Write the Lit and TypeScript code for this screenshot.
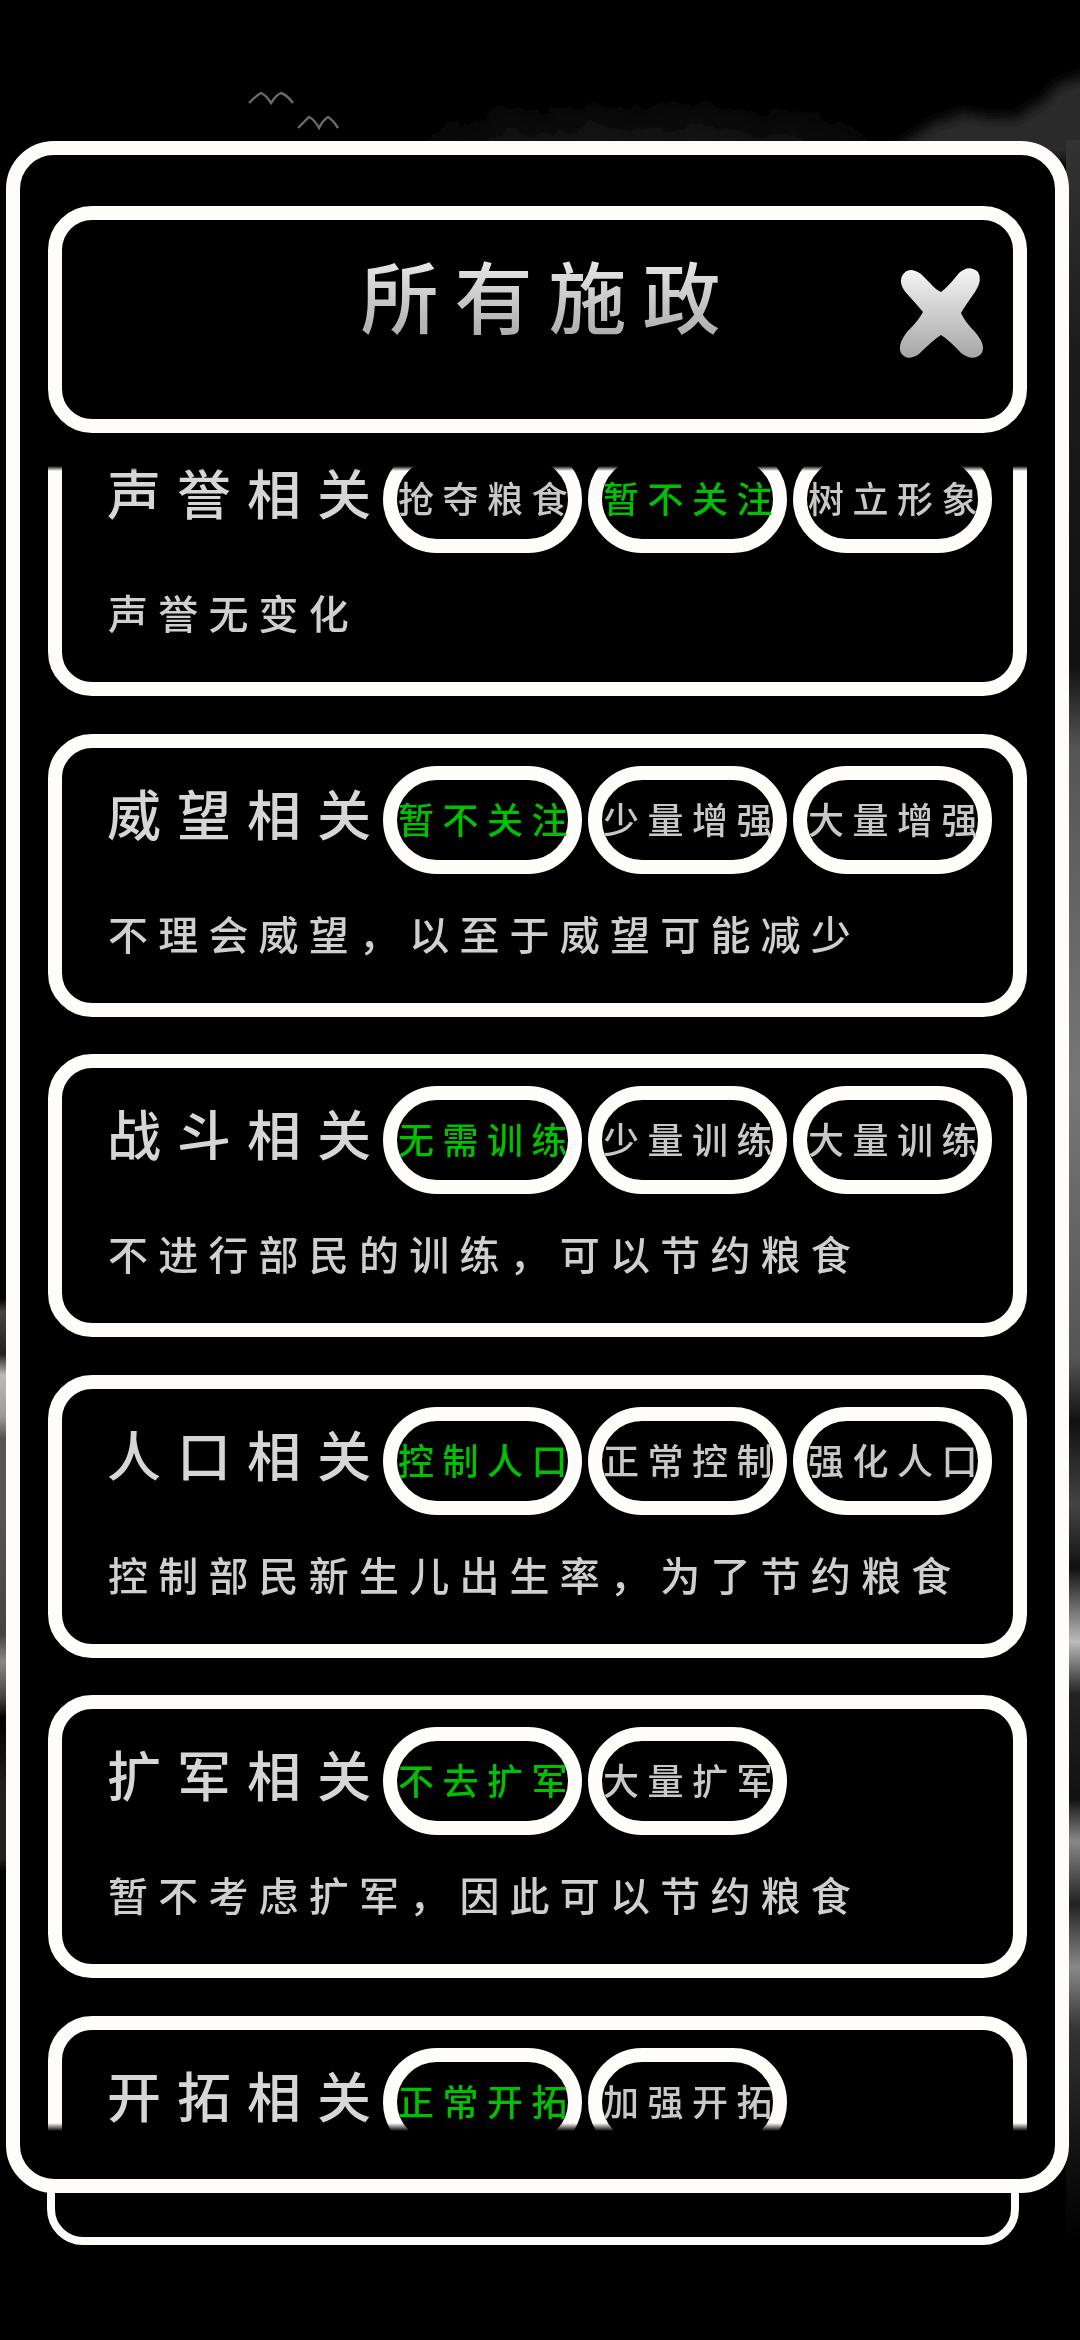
import { LitElement, html, css, svg } from "lit";
import { customElement } from "lit/decorators.js";
import { classMap } from "lit/directives/class-map.js";

interface Policy { title: string; options: string[]; active: number; desc: string; }

const POLICIES: Policy[] = [
  { title: "声誉相关", options: ["抢夺粮食", "暂不关注", "树立形象"], active: 1, desc: "声誉无变化" },
  { title: "威望相关", options: ["暂不关注", "少量增强", "大量增强"], active: 0, desc: "不理会威望，以至于威望可能减少" },
  { title: "战斗相关", options: ["无需训练", "少量训练", "大量训练"], active: 0, desc: "不进行部民的训练，可以节约粮食" },
  { title: "人口相关", options: ["控制人口", "正常控制", "强化人口"], active: 0, desc: "控制部民新生儿出生率，为了节约粮食" },
  { title: "扩军相关", options: ["不去扩军", "大量扩军"], active: 0, desc: "暂不考虑扩军，因此可以节约粮食" },
  { title: "开拓相关", options: ["正常开拓", "加强开拓"], active: 0, desc: "" },
];

const backdrop = svg`
  <svg class="art" viewBox="0 0 1080 2340" width="1080" height="2340" aria-hidden="true">
    <defs>
      <filter id="ink" x="-40%" y="-150%" width="180%" height="400%">
        <feGaussianBlur stdDeviation="24" result="soft"/>
        <feTurbulence type="fractalNoise" baseFrequency="0.035 0.02" numOctaves="3" seed="4" result="n"/>
        <feDisplacementMap in="soft" in2="n" scale="30"/>
      </filter>
      <filter id="b4" x="-20%" y="-30%" width="140%" height="160%">
        <feTurbulence type="fractalNoise" baseFrequency="0.05" numOctaves="2" seed="8" result="n"/>
        <feDisplacementMap in="SourceGraphic" in2="n" scale="12"/>
        <feGaussianBlur stdDeviation="7"/>
      </filter>
      <linearGradient id="left" gradientUnits="userSpaceOnUse" x1="0" y1="1200" x2="0" y2="1900">
        <stop offset="0" stop-color="#000"/><stop offset=".14" stop-color="#000"/>
        <stop offset=".16" stop-color="#444"/><stop offset=".22" stop-color="#222"/>
        <stop offset=".25" stop-color="#bbb"/><stop offset=".31" stop-color="#999"/>
        <stop offset=".34" stop-color="#555"/><stop offset=".45" stop-color="#555"/>
        <stop offset=".62" stop-color="#444"/><stop offset=".66" stop-color="#888"/>
        <stop offset=".71" stop-color="#444"/><stop offset=".74" stop-color="#000"/>
        <stop offset=".84" stop-color="#222"/><stop offset=".94" stop-color="#222"/>
        <stop offset=".96" stop-color="#000"/>
      </linearGradient>
      <linearGradient id="right" gradientUnits="userSpaceOnUse" x1="0" y1="140" x2="0" y2="2240">
        <stop offset="0" stop-color="#333"/><stop offset=".1" stop-color="#1c1c1c"/>
        <stop offset=".25" stop-color="#111"/><stop offset=".29" stop-color="#555"/>
        <stop offset=".45" stop-color="#777"/><stop offset=".58" stop-color="#555"/>
        <stop offset=".61" stop-color="#111"/><stop offset=".65" stop-color="#444"/>
        <stop offset=".68" stop-color="#111"/><stop offset=".715" stop-color="#bbb"/>
        <stop offset=".74" stop-color="#222"/><stop offset=".79" stop-color="#111"/>
        <stop offset=".81" stop-color="#888"/><stop offset=".84" stop-color="#222"/>
        <stop offset=".87" stop-color="#888"/><stop offset=".9" stop-color="#333"/>
        <stop offset=".96" stop-color="#111"/><stop offset="1" stop-color="#000"/>
      </linearGradient>
    </defs>
    <rect width="1080" height="2340" fill="#000"/>
    <ellipse cx="650" cy="158" rx="220" ry="30" fill="#1e1e1e" filter="url(#ink)"/>
    <ellipse cx="220" cy="170" rx="190" ry="24" fill="#101010" filter="url(#ink)"/>
    <path d="M880 160 L925 130 L958 112 L985 118 L1018 118 L1050 92 L1090 74 L1090 160 Z" fill="#2a2a2a" filter="url(#b4)"/>
    <rect x="0" y="1200" width="8" height="700" fill="url(#left)"/>
    <rect x="1066" y="140" width="14" height="2100" fill="url(#right)"/>
    <path d="M249 103 Q257 95 261 93 Q266 95 271 103 Q276 95 281 93 Q287 95 293 103" fill="none" stroke="#6a6a6a" stroke-width="2.4"/>
    <path d="M298 128 Q306 120 309 117 Q314 119 319 128 Q323 120 328 117 Q333 120 338 128" fill="none" stroke="#6a6a6a" stroke-width="2.4"/>
  </svg>`;

@customElement("app-root")
export class AppRoot extends LitElement {
  static styles = css`
    :host {
      display: block;
      width: 1080px;
      height: 2340px;
      position: relative;
      overflow: hidden;
      background: #000;
      font-family: "Noto Sans CJK SC", "Noto Sans", sans-serif;
      color: #d6d6d6;
    }
    .art { position: absolute; inset: 0; display: block; }
    .under {
      position: absolute;
      left: 47px;
      top: 2100px;
      width: 972px;
      height: 145px;
      box-sizing: border-box;
      border: 8px solid #fffdfa;
      border-radius: 36px;
      background: #000;
    }
    .panel {
      position: absolute;
      left: 6px;
      top: 141px;
      width: 1063px;
      height: 2052px;
      box-sizing: border-box;
      background: #000;
      border: 14px solid #fffdfa;
      border-radius: 48px;
      padding: 51px 28px 48px 28px;
      display: flex;
      flex-direction: column;
      gap: 33px;
    }
    .header {
      position: relative;
      flex: none;
      height: 227px;
      box-sizing: border-box;
      border: 14px solid #fffdfa;
      border-radius: 44px;
      display: flex;
      justify-content: center;
      align-items: flex-start;
      padding: 26px 0 0 22px;
    }
    .heading {
      font-size: 78px;
      line-height: 96px;
      letter-spacing: 16px;
      margin: 0;
      font-weight: 500;
      background: linear-gradient(#f2f2f2, #a8a8a8);
      -webkit-background-clip: text;
      background-clip: text;
      color: transparent;
    }
    .close {
      position: absolute;
      left: 831px;
      top: 42px;
      width: 100px;
      height: 100px;
      display: block;
    }
    .list {
      flex: 1;
      min-height: 0;
      overflow: hidden;
      -webkit-mask-image: linear-gradient(transparent, #000 5px, #000 calc(100% - 8px), transparent);
      mask-image: linear-gradient(transparent, #000 5px, #000 calc(100% - 8px), transparent);
    }
    .scroller {
      margin-top: -53px;
      display: flex;
      flex-direction: column;
      gap: 37.5px;
    }
    .card {
      flex: none;
      height: 283px;
      box-sizing: border-box;
      border: 14px solid #fffdfa;
      border-radius: 44px;
      padding: 18px 19px 0 45px;
    }
    .row { display: flex; align-items: center; height: 108px; }
    .title {
      flex: none;
      width: 276px;
      font-size: 54px;
      line-height: 70px;
      letter-spacing: 16px;
      white-space: nowrap;
      font-weight: 500;
      position: relative;
      top: -7px;
    }
    .pills { display: flex; gap: 6px; }
    .pill {
      flex: none;
      width: 199px;
      height: 108px;
      box-sizing: border-box;
      border: 14px solid #fffdfa;
      border-radius: 54px;
      display: flex;
      align-items: center;
      justify-content: center;
      padding-bottom: 4px;
      font-size: 36px;
      font-weight: 500;
      letter-spacing: 8.5px;
      text-indent: 9px;
      white-space: nowrap;
      color: #c8c8c8;
    }
    .pill.on { color: #00c000; }
    .desc {
      margin: 29px 0 0 1px;
      font-size: 40px;
      font-weight: 500;
      line-height: 60px;
      letter-spacing: 10.2px;
      white-space: nowrap;
      color: #cfcfcf;
    }
  `;

  render() {
    return html`
      ${backdrop}
      <div class="under"></div>
      <section class="panel">
        <header class="header">
          <h1 class="heading">所有施政</h1>
          <svg class="close" viewBox="30 22 100 100" aria-label="关闭">
            <defs>
              <linearGradient id="x" x1="0" y1="0" x2="0" y2="1">
                <stop offset="0" stop-color="#f6f6f6"/>
                <stop offset="1" stop-color="#a6a6a6"/>
              </linearGradient>
            </defs>
            <path fill="url(#x)" d="M78 52 Q73 50 66 42 L58 34 Q45 25 39 36 Q35 45 46 56 Q55 66 60 72 Q56 80 44 92 Q34 105 38 113 Q44 122 56 114 Q70 100 78 95 Q86 100 98 113 Q110 122 118 114 Q124 106 112 92 Q102 82 98 73 Q102 66 112 52 Q120 40 115 32 Q106 24 96 33 Q84 48 78 52 Z"/>
          </svg>
        </header>
        <div class="list">
          <div class="scroller">
            ${POLICIES.map(
              (p) => html`
                <article class="card">
                  <div class="row">
                    <div class="title">${p.title}</div>
                    <div class="pills">
                      ${p.options.map(
                        (o, i) => html`<div class=${classMap({ pill: true, on: i === p.active })}>${o}</div>`
                      )}
                    </div>
                  </div>
                  <p class="desc">${p.desc}</p>
                </article>
              `
            )}
          </div>
        </div>
      </section>
    `;
  }
}
